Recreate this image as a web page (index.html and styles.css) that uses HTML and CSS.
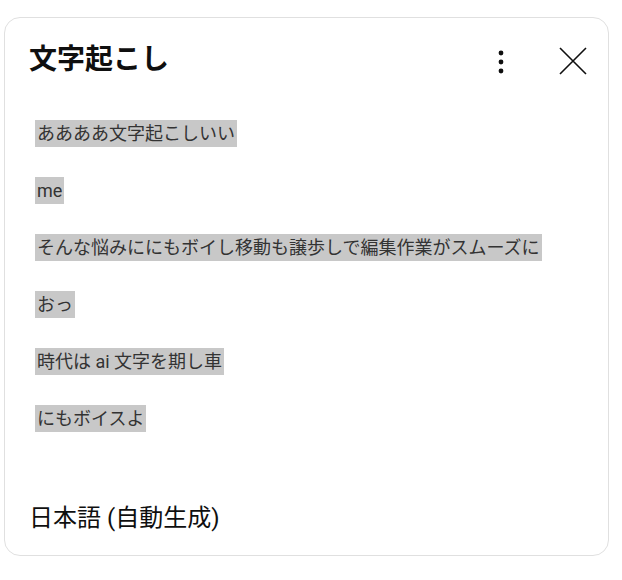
FILE: index.html
```html
<!DOCTYPE html>
<html lang="ja">
<head>
<meta charset="utf-8">
<link rel="stylesheet" href="styles.css">
</head>
<body>
<div class="page">
  <section class="panel">
    <header class="panel-header">
      <h2 class="panel-title">文字起こし</h2>
      <div class="actions">
        <button class="icon-btn" aria-label="その他">
          <svg width="40" height="40" viewBox="0 0 40 40"><circle cx="24" cy="13" r="2.4"/><circle cx="24" cy="22" r="2.4"/><circle cx="24" cy="31" r="2.4"/></svg>
        </button>
        <button class="icon-btn" aria-label="閉じる">
          <svg width="40" height="40" viewBox="0 0 40 40"><path d="M11 8 L37 34 M37 8 L11 34" stroke="#0f0f0f" stroke-width="1.6" fill="none"/></svg>
        </button>
      </div>
    </header>
    <div class="segments">
      <div class="segment"><span class="seg-text">ああああ文字起こしいい</span></div>
      <div class="segment"><span class="seg-text">me</span></div>
      <div class="segment"><span class="seg-text">そんな悩みににもボイし移動も譲歩しで編集作業がスムーズに</span></div>
      <div class="segment"><span class="seg-text">おっ</span></div>
      <div class="segment"><span class="seg-text">時代は ai 文字を期し車</span></div>
      <div class="segment"><span class="seg-text">にもボイスよ</span></div>
    </div>
    <footer class="panel-footer">日本語 (自動生成)</footer>
  </section>
</div>
</body>
</html>
```
FILE: styles.css
```css
html, body {
  margin: 0;
  padding: 0;
  background: #ffffff;
}
body {
  font-family: Roboto, "Noto Sans CJK JP", sans-serif;
  color: #0f0f0f;
}
.page {
  padding: 17px 0 0 4px;
}
.panel {
  box-sizing: border-box;
  width: 605px;
  height: 539px;
  border: 1px solid #e0e0e0;
  border-radius: 16px;
  display: flex;
  flex-direction: column;
}
.panel-header {
  height: 84px;
  display: flex;
  align-items: center;
  justify-content: space-between;
  padding: 0 19px 0 24px;
}
.panel-title {
  margin: 0;
  font-size: 28px;
  font-weight: 700;
  line-height: 40px;
  color: #0f0f0f;
}
.actions {
  display: flex;
  align-items: center;
  gap: 32px;
}
.icon-btn {
  width: 40px;
  height: 40px;
  padding: 0;
  border: none;
  background: transparent;
  display: block;
}
.icon-btn svg {
  display: block;
  fill: #0f0f0f;
}
.segments {
  display: flex;
  flex-direction: column;
  gap: 30px;
  padding: 18px 0 0 30px;
}
.segment {
  height: 27px;
}
.seg-text {
  display: inline-block;
  height: 27px;
  line-height: 27px;
  padding: 0 2px;
  font-size: 18px;
  color: #333333;
  background: #c8c8c8;
}
.panel-footer {
  margin-top: auto;
  padding: 0 0 19px 24px;
  font-size: 24px;
  line-height: 36px;
  color: #0f0f0f;
}
```
